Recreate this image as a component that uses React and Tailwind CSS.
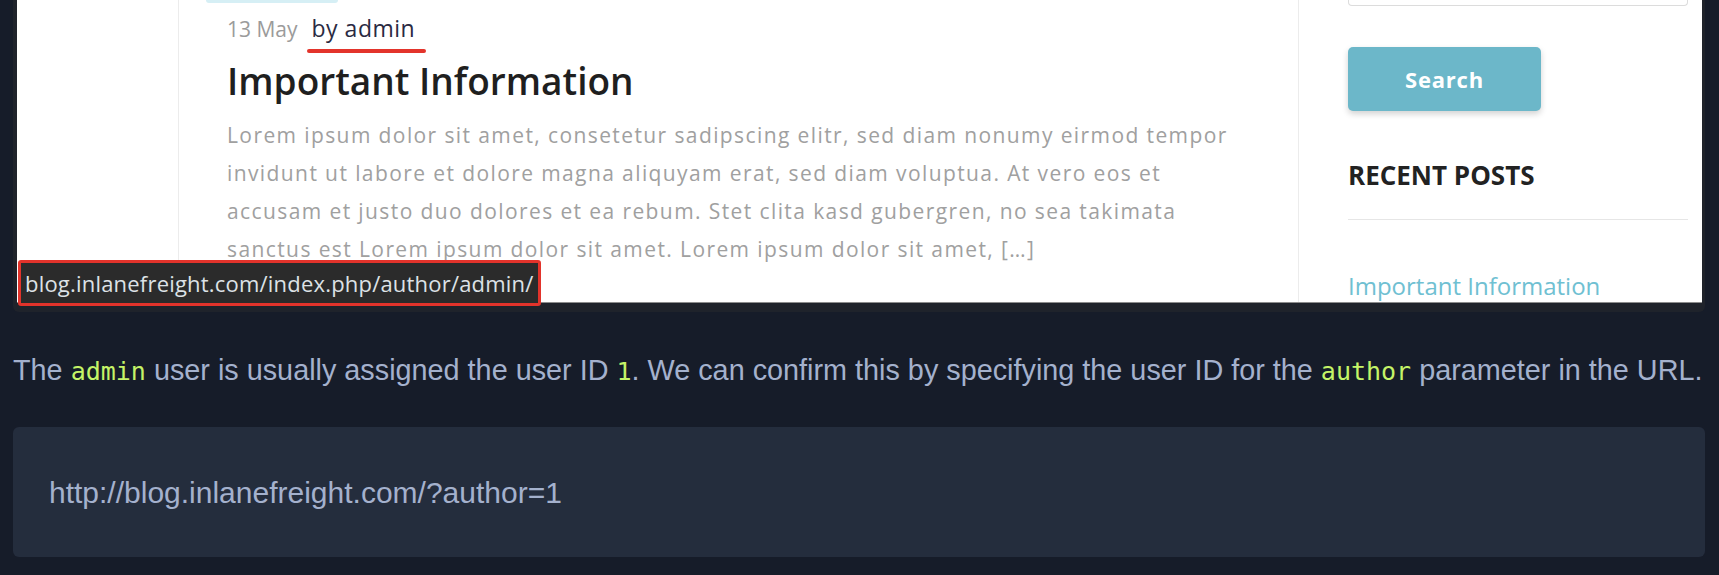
import React from "react";

const sans = "font-['Open_Sans',sans-serif]";
const mono = "text-[#c5f467] font-['DejaVu_Sans_Mono',monospace] text-[25px]";

export default function App() {
  return (
    <div className="relative w-[1719px] h-[575px] bg-[#161c29] overflow-hidden">
      <div className="ml-[13px] w-[1692px]">
        <div className="relative bg-[#1f232b] rounded-b-[6px] pl-[4px] pr-[3px] pb-[9px]">
          <div className={`h-[303px] bg-white border-b border-[#8c8c8c] flex overflow-hidden ${sans}`}>
            <div className="w-[161px] shrink-0" />
            <div className="w-[1120px] shrink-0 border-l border-[#ececec]">
              <div className="ml-[27px] w-[132px] h-[3px] bg-[#d6eff5] rounded-b-[3px]" />
              <div className="pl-[48px]">
                <div className="pt-[11px] flex items-baseline leading-[28px]">
                  <span className="text-[21px] text-[#9b9b9b]">13 May</span>
                  <span className="relative ml-[14px] text-[23px] tracking-[0.5px] text-[#2a2a42]">
                    <span>by admin</span>
                    <span className="absolute left-[-5px] right-[-11px] top-[35px] h-[4px] rounded-full bg-[#e3342b]" />
                  </span>
                </div>
                <div className="mt-[13px] text-[37px] leading-[50px] font-semibold text-[#1f1f1f]">Important Information</div>
                <div className="mt-[10px] text-[21px] tracking-[1.4px] leading-[38px] text-[#a0a0a0]">
                  <div>Lorem ipsum dolor sit amet, consetetur sadipscing elitr, sed diam nonumy eirmod tempor</div>
                  <div>invidunt ut labore et dolore magna aliquyam erat, sed diam voluptua. At vero eos et</div>
                  <div>accusam et justo duo dolores et ea rebum. Stet clita kasd gubergren, no sea takimata</div>
                  <div>sanctus est Lorem ipsum dolor sit amet. Lorem ipsum dolor sit amet, […]</div>
                </div>
              </div>
            </div>
            <div className="flex-1 border-l border-[#ececec] pl-[49px] pr-[14px]">
              <div className="h-[6px] border border-t-0 border-[#dcdcdc] rounded-b-[4px]" />
              <div className="mt-[41px] w-[193px] h-[64px] rounded-[5px] bg-[#6cb7c9] shadow-[0_3px_6px_rgba(0,0,0,0.18)] flex items-center justify-center">
                <span className="text-white font-bold text-[22px] tracking-[0.8px]">Search</span>
              </div>
              <div className="mt-[49px] h-[30px] leading-[30px]">
                <span className="text-[#222] font-bold text-[26px]">RECENT POSTS</span>
              </div>
              <div className="mt-[29px] h-px bg-[#e6e6e6]" />
              <div className="mt-[51px] h-[30px] leading-[30px]">
                <span className="text-[#6fc0d2] text-[24px]">Important Information</span>
              </div>
            </div>
          </div>
          <div className="absolute left-[5px] top-[260px] w-[523px] h-[46px] border-[3px] border-[#e2332b] rounded-[3px] bg-[#2b2b2b] flex items-center pl-[4px]">
            <span className="text-[#dde2e6] text-[22px] tracking-[0.2px] font-['Open_Sans',sans-serif]">blog.inlanefreight.com/index.php/author/admin/</span>
          </div>
        </div>
        <p className="mt-[41px] text-[28.8px] leading-[34px] text-[#a4b1cd] font-['Liberation_Sans',Arial,sans-serif] whitespace-nowrap">
          The <code className={mono}>admin</code> user is usually assigned the user ID{" "}
          <code className={mono}>1</code>. We can confirm this by specifying the user ID for the{" "}
          <code className={mono}>author</code> parameter in the URL.
        </p>
        <div className="mt-[38px] h-[130px] rounded-[6px] bg-[#242d3d] flex items-center pl-[36px]">
          <span className="text-[#a4b1cd] text-[30px] font-['Liberation_Sans',Arial,sans-serif]">http://blog.inlanefreight.com/?author=1</span>
        </div>
      </div>
    </div>
  );
}
